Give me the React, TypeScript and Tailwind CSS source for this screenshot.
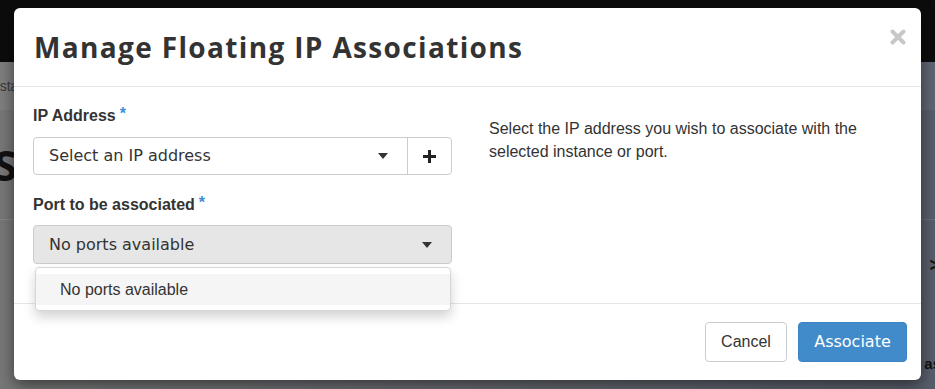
import React from "react"

const sans = "font-['Liberation_Sans',Arial,sans-serif]"
const deja = "font-['DejaVu_Sans',sans-serif]"

function Caret() {
  return (
    <svg width="10" height="6" viewBox="0 0 10 6" className="text-[#333]">
      <path d="M0 0h10L5 6z" fill="currentColor" />
    </svg>
  )
}

function Required() {
  return <span className="ml-[4px] align-top text-[16px] leading-[18px] text-[#3a8fd6]">*</span>
}

export default function App() {
  return (
    <div className="relative h-[389px] w-[935px] overflow-hidden">
      {/* page behind the backdrop */}
      <div className="flex h-full flex-col bg-gradient-to-r from-[#777777] via-[#676a70] to-[#575d6a]">
        <div className="h-[62px] bg-[#0c0c0c]" />
        <div className="flex h-[48px] items-center bg-white/5 text-[14px] text-[#3a3a3a]">
          <span className={`${sans} -ml-[12px]`}>Insta</span>
        </div>
        <div className="flex h-[110px] items-center border-b border-white/10">
          <span className="-ml-[20px] font-['Open_Sans',sans-serif] text-[42px] font-bold text-[#111]">IS</span>
        </div>
        <div className="flex h-[60px] items-end justify-end">
          <span className="mr-[-6px] text-[20px] font-bold text-[#111]">&gt;</span>
        </div>
        <div className="flex flex-1 items-end justify-end pb-[14px]">
          <span className={`${sans} mr-[-6px] text-[15px] font-bold text-[#111]`}>as</span>
        </div>
      </div>

      {/* modal */}
      <div className="absolute left-[14px] top-[8px] flex h-[372px] w-[907px] flex-col rounded-[6px] bg-white shadow-[0_5px_15px_rgba(0,0,0,0.5)]">
        <div className="relative flex h-[79px] shrink-0 items-center border-b border-[#e5e5e5] px-[20px]">
          <h1 className="font-['Open_Sans',sans-serif] text-[28px] font-bold tracking-[1.35px] text-[#333]">
            Manage Floating IP Associations
          </h1>
          <button className="absolute right-[15px] top-[21px]">
            <svg width="16" height="16" viewBox="0 0 16 16">
              <path d="M2.5 2.5l11 11M13.5 2.5l-11 11" stroke="#c8c8c8" strokeWidth="4" strokeLinecap="round" />
            </svg>
          </button>
        </div>

        <div className="flex h-[216px] shrink-0 px-[19px] pt-[18px]">
          <div className="w-[419px] shrink-0">
            <label className={`${sans} block h-[22px] text-[16px] font-bold leading-[22px] text-[#333]`}>
              IP Address
              <Required />
            </label>
            <div className="mt-[10px] flex h-[38px] rounded-[4px] border border-[#cccccc]">
              <div className={`${deja} flex flex-1 items-center justify-between pl-[15px] pr-[19px] text-[16px] text-[#333]`}>
                <span>Select an IP address</span>
                <Caret />
              </div>
              <div className="flex w-[44px] items-center justify-center border-l border-[#cccccc]">
                <svg width="13" height="13" viewBox="0 0 13 13">
                  <path d="M6.5 0v13M0 6.5h13" stroke="#222" strokeWidth="3" />
                </svg>
              </div>
            </div>

            <label className={`${sans} mt-[19px] block h-[22px] text-[16px] font-bold leading-[22px] text-[#333]`}>
              Port to be associated
              <Required />
            </label>
            <div className="relative mt-[9px]">
              <div className={`${deja} flex h-[39px] items-center justify-between rounded-[4px] border border-[#cccccc] bg-[#e6e6e6] pl-[15px] pr-[19px] text-[16px] text-[#333]`}>
                <span>No ports available</span>
                <Caret />
              </div>
              <div className="absolute left-[2px] right-[1px] top-[42px] z-10 h-[44px] rounded-[4px] border border-[#d6d6d6] bg-white py-[6px] shadow-[0_6px_12px_rgba(0,0,0,0.175)]">
                <div className={`${sans} flex h-[31px] items-center bg-[#f5f5f5] pl-[24px] text-[16px] text-[#333]`}>
                  No ports available
                </div>
              </div>
            </div>
          </div>
          <p className={`${sans} ml-[37px] mt-[12px] w-[390px] text-[16px] leading-[23px] text-[#333]`}>
            Select the IP address you wish to associate with the selected instance or port.
          </p>
        </div>

        <div className="flex flex-1 items-center justify-end gap-[11px] border-t border-[#e5e5e5] pr-[14px]">
          <button className={`${sans} h-[40px] w-[82px] rounded-[4px] border border-[#cccccc] bg-white text-[16px] text-[#333]`}>
            Cancel
          </button>
          <button className={`${deja} h-[40px] w-[109px] rounded-[4px] border border-[#3a84c4] bg-[#428bca] text-[16px] text-white`}>
            Associate
          </button>
        </div>
      </div>
    </div>
  )
}
